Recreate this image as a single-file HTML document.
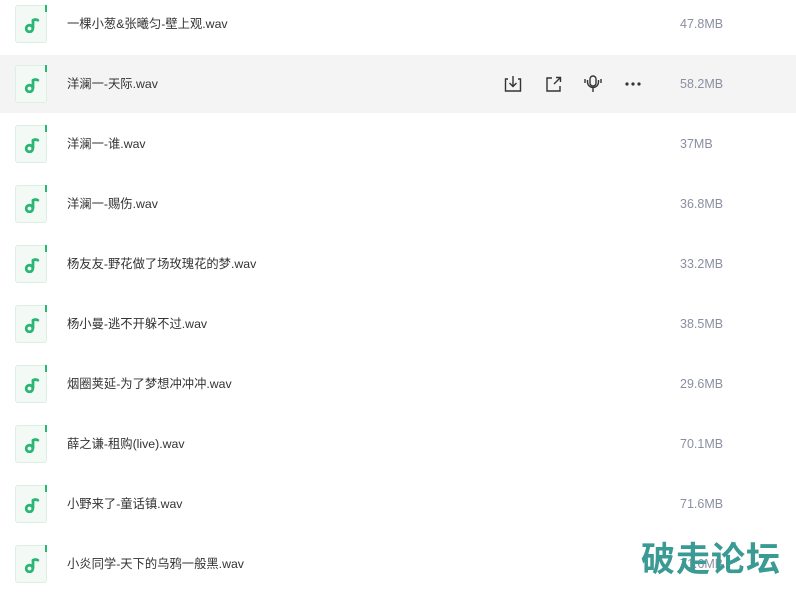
<!DOCTYPE html>
<html><head><meta charset="utf-8"><style>
body{margin:0;width:796px;height:581px;overflow:hidden;background:#fff;font-family:"Liberation Sans","Noto Sans CJK SC",sans-serif;position:relative}
.row{position:absolute;left:0;width:796px;height:58px}
.row.h{background:#f4f4f4}
.ic{position:absolute;left:15px;top:10px;width:32px;height:38px;border:1px solid #dcefe4;border-radius:3px;background:#f3faf6;box-sizing:border-box}
.ic:after{content:"";position:absolute;right:-1px;top:-1px;width:2px;height:7px;background:#2bb673}
.ic svg{position:absolute;left:8px;top:11px}
.nm{position:absolute;left:67px;top:0;line-height:58px;font-size:12.3px;color:#333}
.sz{position:absolute;left:680px;top:0;line-height:58px;font-size:12.5px;color:#8a8fa0}
.ops{position:absolute;top:19px}
.wm{position:absolute;left:641px;top:537px;font-size:34px;font-weight:bold;color:#3a9a94;letter-spacing:1px;font-family:"Noto Sans CJK SC",sans-serif;line-height:40px}
</style></head><body>
<div id="list"></div>
<script>
var d=[["一棵小葱&张曦匀-壁上观.wav","47.8MB"],["洋澜一-天际.wav","58.2MB"],["洋澜一-谁.wav","37MB"],["洋澜一-赐伤.wav","36.8MB"],["杨友友-野花做了场玫瑰花的梦.wav","33.2MB"],["杨小曼-逃不开躲不过.wav","38.5MB"],["烟圈荚延-为了梦想冲冲冲.wav","29.6MB"],["薛之谦-租购(live).wav","70.1MB"],["小野来了-童话镇.wav","71.6MB"],["小炎同学-天下的乌鸦一般黑.wav","71.6MB"]];
var note='<svg width="16" height="16" viewBox="0 0 16 16"><path d="M9 3v8.5" stroke="#2bb673" stroke-width="2.8" fill="none"/><path d="M9 3.2c1.6-.9 3.2-.9 4.8 0" stroke="#2bb673" stroke-width="2.8" fill="none" stroke-linecap="round"/><circle cx="5.5" cy="11.5" r="3.3" stroke="#2bb673" stroke-width="2.8" fill="none"/></svg>';
var h='';
d.forEach(function(r,i){
 h+='<div class="row'+(i==1?' h':'')+'" style="top:'+(i*60-5)+'px"><div class="ic">'+note+'</div><div class="nm">'+r[0]+'</div><div class="sz">'+r[1]+'</div>';
 if(i==1){h+='<svg class="ops" style="left:503px" width="140" height="20" viewBox="0 0 140 20" fill="none" stroke="#333" stroke-width="1.4"><path d="M5 5H2.5v12h15V5H15"/><path d="M10 2v10M6.5 9l3.5 3.5L13.5 9"/><path d="M49 4h-5v13h13v-5"/><path d="M51 10l6-6M53 3.5h4.5V8"/><rect x="87" y="2" width="6" height="10" rx="3"/><path d="M84.5 6v2a5.5 5.5 0 0011 0V6M90 14v4M82 5v4M98 5v4"/><circle cx="124" cy="10" r=".9" fill="#333"/><circle cx="130" cy="10" r=".9" fill="#333"/><circle cx="136" cy="10" r=".9" fill="#333"/></svg>';}
 h+='</div>';
});
document.getElementById('list').innerHTML=h;
</script>
<div class="wm">破走论坛</div>
</body></html>
